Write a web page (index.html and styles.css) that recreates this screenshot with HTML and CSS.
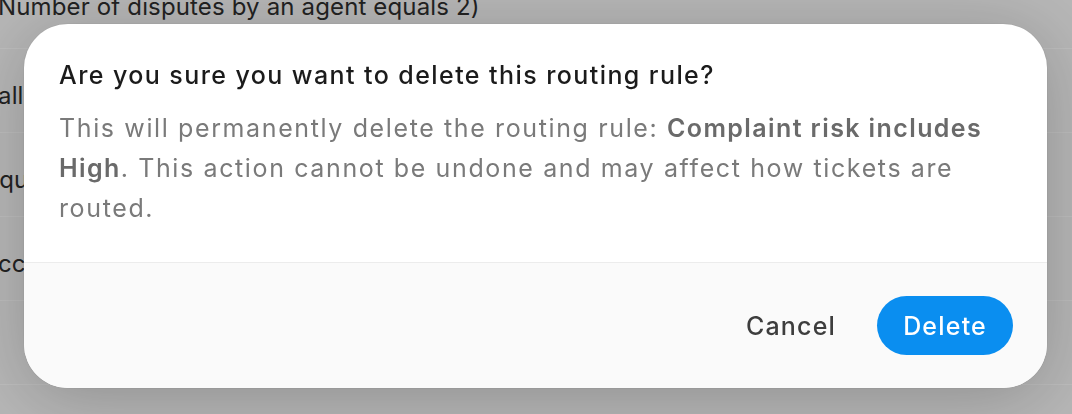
FILE: index.html
```html
<!DOCTYPE html>
<html lang="en">
<head>
<meta charset="utf-8">
<title>Delete routing rule</title>
<link rel="stylesheet" href="styles.css">
</head>
<body>
<div class="page">
  <div class="row row-first"><span class="cell">Number of disputes by an agent equals 2)</span></div>
  <div class="row"><span class="cell">all</span></div>
  <div class="row"><span class="cell cell-shift">equ</span></div>
  <div class="row"><span class="cell">cc</span></div>
  <div class="row"><span class="cell"></span></div>
</div>
<div class="overlay">
  <div class="modal" role="dialog" aria-labelledby="dlg-title">
    <div class="modal-body">
      <h2 class="modal-title" id="dlg-title">Are you sure you want to delete this routing rule?</h2>
      <p class="modal-text">This will permanently delete the routing rule: <strong>Complaint risk includes High</strong>. This action cannot be undone and may affect how tickets are routed.</p>
    </div>
    <div class="modal-footer">
      <button class="btn btn-cancel" type="button">Cancel</button>
      <button class="btn btn-delete" type="button">Delete</button>
    </div>
  </div>
</div>
</body>
</html>
```

FILE: styles.css
```css
* { box-sizing: border-box; }
html, body { margin: 0; padding: 0; }
body {
  width: 1072px;
  height: 414px;
  overflow: hidden;
  background: #f6f6f6;
  font-family: Inter, "Liberation Sans", sans-serif;
  color: #2e2e2e;
}
.page {
  display: flex;
  flex-direction: column;
  margin-left: -2px;
}
.row {
  height: 84px;
  border-bottom: 1px solid #ffffff;
  display: flex;
  align-items: center;
  font-size: 24px;
  letter-spacing: 0.15px;
  padding-top: 10px;
}
.row-first {
  height: 49px;
  align-items: flex-start;
  padding-top: 0;
}
.row-first .cell { margin-top: -8px; }
.cell-shift { margin-left: -13px; }
.overlay {
  position: fixed;
  inset: 0;
  background: rgba(0, 0, 0, 0.26);
  display: flex;
  padding: 24px 25px 26px 24px;
}
.modal {
  flex: 1;
  background: #ffffff;
  border-radius: 44px;
  overflow: hidden;
  display: flex;
  flex-direction: column;
  box-shadow: 0 0 0 1px rgba(0,0,0,0.03), 0 10px 70px rgba(0, 0, 0, 0.22);
}
.modal-body {
  flex: 1;
  padding: 35px 30px 33px 35px;
}
.modal-title {
  margin: 0 0 17px;
  font-size: 25px;
  line-height: 32px;
  font-weight: 500;
  color: #1b1b1b;
  letter-spacing: 1.42px;
}
.modal-text {
  margin: 0;
  font-size: 25px;
  line-height: 40px;
  color: #7a7a7a;
  letter-spacing: 1.62px;
}
.modal-text strong {
  font-weight: 600;
  color: #6a6a6a;
  letter-spacing: 1.4px;
}
.modal-footer {
  background: #fafafa;
  border-top: 1px solid #ececec;
  padding: 33px 34px 33px 34px;
  display: flex;
  justify-content: flex-end;
  align-items: center;
  gap: 16px;
}
.btn {
  font-family: inherit;
  font-size: 25px;
  font-weight: 500;
  letter-spacing: 1.2px;
  height: 59px;
  border: none;
  border-radius: 30px;
  cursor: pointer;
}
.btn-cancel {
  background: transparent;
  color: #3d3d3d;
  padding: 0 25px;
}
.btn-delete {
  background: #0a8ef0;
  color: #ffffff;
  padding: 0 26px;
}
```
